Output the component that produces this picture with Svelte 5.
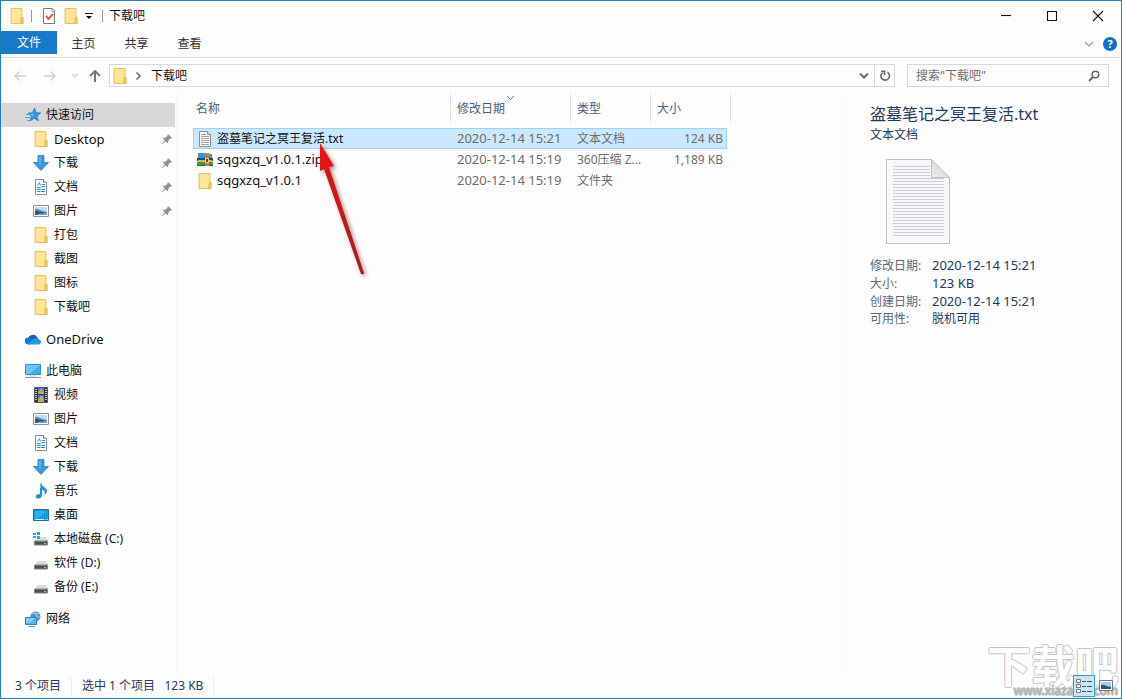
<script>
  const groups = [
    {
      icon: 'star', label: '快速访问', active: true,
      items: [
        { icon: 'folder', label: 'Desktop', pin: true },
        { icon: 'down', label: '下载', pin: true },
        { icon: 'doc', label: '文档', pin: true },
        { icon: 'pic', label: '图片', pin: true },
        { icon: 'folder', label: '打包' },
        { icon: 'folder', label: '截图' },
        { icon: 'folder', label: '图标' },
        { icon: 'folder', label: '下载吧' }
      ]
    },
    { icon: 'cloud', label: 'OneDrive', items: [] },
    {
      icon: 'pc', label: '此电脑',
      items: [
        { icon: 'film', label: '视频' },
        { icon: 'pic', label: '图片' },
        { icon: 'doc', label: '文档' },
        { icon: 'down', label: '下载' },
        { icon: 'music', label: '音乐' },
        { icon: 'screen', label: '桌面' },
        { icon: 'sysdisk', label: '本地磁盘 (C:)' },
        { icon: 'disk', label: '软件 (D:)' },
        { icon: 'disk', label: '备份 (E:)' }
      ]
    },
    { icon: 'net', label: '网络', items: [] }
  ];

  const files = [
    { icon: 'text', name: '盗墓笔记之冥王复活.txt', date: '2020-12-14 15:21', type: '文本文档', size: '124 KB' },
    { icon: 'zip', name: 'sqgxzq_v1.0.1.zip', date: '2020-12-14 15:19', type: '360压缩 Z...', size: '1,189 KB' },
    { icon: 'folder', name: 'sqgxzq_v1.0.1', date: '2020-12-14 15:19', type: '文件夹', size: '' }
  ];

  const details = [
    ['修改日期:', '2020-12-14 15:21'],
    ['大小:', '123 KB'],
    ['创建日期:', '2020-12-14 15:21'],
    ['可用性:', '脱机可用']
  ];

  const isLatin = (s) => /^[\x20-\x7e]+$/.test(s);
  let selected = $state(0);
  let query = $state('');
</script>

{#snippet icon(name)}
  <svg class="icon" viewBox="0 0 16 16" width="16" height="16" aria-hidden="true">
    {#if name === 'folder'}
      <path d="M2 .5h11v9h1v6H2z" fill="#fde38d" stroke="#e2c463" />
      <path d="M3 1.500h9v13H3z" fill="#ffe597" />
      <path d="M12 9.500h2v6h-2.500z" fill="#f4d06d" stroke="#dfbd55" />
    {:else if name === 'star'}
      <path d="M9.500 1l1.700 4.700 4.600.2-3.700 3 1.200 5-4.100-2.700L5 14l1.400-5L3 6.100l4.500-.4z" fill="#2f9be3" stroke="#1c75bb" stroke-width=".7" />
      <path d="M1 7.500h4M0 10.500h5M2 13.500h3" stroke="#4aa7e3" />
      <path d="M9.300 3l-1 4-3-.2 2.500 2.500z" fill="#8acbf5" />
    {:else if name === 'down'}
      <path d="M5 .5h6v7h4.500L8 15.500.5 7.500H5z" fill="#3d96e2" stroke="#2a7cc7" stroke-width=".8" />
      <path d="M6 1.500h2v8H6z" fill="#62adea" />
    {:else if name === 'doc'}
      <path d="M2.500.5h8l3 3v12h-11z" fill="#fff" stroke="#8b8f94" />
      <path d="M10.500.5v3h3" fill="#e8e8e8" stroke="#8b8f94" />
      <path d="M4.500 6.500l2-3 1 3M4 8.500h3.500M9 5.500h3M8.500 7.500H12M4 10.500h4M9 10.500h3M4 12.500h3.500M8 12.500h4" fill="none" stroke="#2595b5" />
    {:else if name === 'pic'}
      <path d="M.5 2.500h15v11H.5z" fill="#fff" stroke="#8c9196" />
      <path d="M2 4h12v8H2z" fill="#c3ddf3" />
      <path d="M2 6c3-1 5 2 12 3v3H2z" fill="#5d91ba" />
      <path d="M2 8c3-1 5 1 12 2v2H2z" fill="#2d5979" />
      <path d="M5 11l9-1v2H4z" fill="#8baab9" />
    {:else if name === 'cloud'}
      <path d="M3 8a5 5 0 0 1 9-2l2 3H4z" fill="#0b63b4" />
      <path d="M3.600 13.500a3.500 3.500 0 0 1-.5-7c2-.2 3 1 5 2l-3 5z" fill="#1379ce" />
      <path d="M3 12.500C6 11 8 7 11 7c1.500 0 2 1 2.500 1.600 3.500 0 3.200 4.900 0 4.900h-10z" fill="#2298e5" />
    {:else if name === 'pc' || name === 'screen'}
      {#if name === 'pc'}
        <path d="M.5 1.500h15v10H.5z" fill="#39aaf0" stroke="#3c8dbd" />
        <path d="M1 2h14L5 11H1z" fill="#70c6f8" />
        <path d="M5 13h6" stroke="#b9c1c6" />
        <path d="M0 14.500h16" stroke="#8d979d" />
      {:else}
        <path d="M.5 2.500h15v11H.5z" fill="#149bf0" stroke="#256d96" />
        <path d="M2 4h11l-7 7H2z" fill="#33aef8" />
        <path d="M2 12.500h9M12 12.500h1M14 12.500h1" stroke="#d9f0ff" />
      {/if}
    {:else if name === 'film'}
      <path d="M1.500.5h13v15h-13z" fill="#32363d" stroke="#555a60" />
      <path d="M3 2v12M13 2v12" stroke="#eee" stroke-dasharray="1 1" stroke-width="1.500" />
      <path d="M5 1h6v6H5zM5 8h6v7H5z" fill="#5579bf" />
      <path d="M5 5l2-2 2 2 2-1v3H5zM5 12l3-2 3 2v3H5z" fill="#cba956" />
      <path d="M7 3h3M7 10h3" stroke="#a6cff0" />
    {:else if name === 'music'}
      <path d="M7 .5h1.500c0 3 5.500 4 5.500 7.500 0 1.800-1 3-2.500 4 1-3.500-.5-4.500-2.500-5.500V12c0 2-1.500 3.500-3.800 3.500C1.800 15.500 2 11.500 5 11.200L7 11z" fill="#248fdd" />
      <path d="M7.500 1v4" stroke="#67bbf1" />
    {:else if name === 'sysdisk' || name === 'disk'}
      <path d="M4 6h9l2 4H2z" fill="#d9dadb" />
      <path d="M1.500 10h13v4h-13z" fill="#4a4f52" stroke="#81868a" />
      <path d="M3 10.500h10" stroke="#777d80" />
      <path d="M11 12h2v1h-2z" fill="#6edb87" />
      {#if name === 'sysdisk'}
        <path d="M0 2h3v2H0zM4 1h3v3H4zM0 5h3v2H0zM4 5h3v3H4z" fill="#28a9d7" />
      {/if}
    {:else if name === 'net'}
      <circle cx="10.500" cy="5.500" r="5" fill="#4c93bd" />
      <path d="M7 2c3 1 5 0 7 1M10 1c2 3 2 6 1 9M12 6h3" stroke="#a5d3e4" fill="none" />
      <path d="M.5 6.500h11v7H.5z" fill="#51b2ee" stroke="#2c83bd" />
      <path d="M1 7h9l-5 5H1z" fill="#83cef5" />
      <path d="M3 15.500h7" stroke="#6f9cb9" />
    {:else if name === 'text'}
      <path d="M2.500.5h8l3 3v12h-11z" fill="#fff" stroke="#898d91" />
      <path d="M10.500.5v3h3" fill="#ddd" stroke="#898d91" />
      <path d="M4 3.500h5M4 5.500h8M4 7.500h8M4 9.500h8M4 11.500h8M4 13.500h8" stroke="#9da1a5" />
    {:else if name === 'zip'}
      <path d="M1 1h6l2 1h6v5H1z" fill="#3293d7" />
      <path d="M0 6h16v3H0z" fill="#294779" />
      <path d="M1 8h14v2H1z" fill="#e5b73c" />
      <path d="M0 10h16v4H0z" fill="#3f963f" />
      <path d="M0 13.500h16" stroke="#28566b" />
      <path d="M8 1h4v13H8z" fill="#bd8637" />
      <path d="M8.500 6.500h3v4h-3z" fill="#5e4937" stroke="#f4d47e" />
    {/if}
  </svg>
{/snippet}

<div class="window">
  <header class="titlebar">
    <div class="quick">
      {@render icon('folder')}
      <i class="bar"></i>
      <button class="tool" aria-label="属性">
        <svg viewBox="0 0 16 16" width="16" height="16">
          <path d="M2.500.5h9l2 2v13h-11z" fill="#fff" stroke="#76797c" />
          <path d="M11 .5v3h2.500" fill="none" stroke="#999" />
          <path d="M5 8l2.500 3L12 6" fill="none" stroke="#dc623f" stroke-width="2" />
        </svg>
      </button>
      <button class="tool" aria-label="新建文件夹">{@render icon('folder')}</button>
      <button class="tool more" aria-label="自定义快速访问工具栏">
        <svg viewBox="0 0 8 8" width="8" height="8"><path d="M0 1.500h8" stroke="#222" /><path d="M1 4h6L4 7z" fill="#111" /></svg>
      </button>
      <i class="bar"></i>
      <span class="caption">下载吧</span>
    </div>
    <div class="controls">
      <button aria-label="最小化"><svg viewBox="0 0 10 10"><path d="M0 4.500h10" /></svg></button>
      <button aria-label="最大化"><svg viewBox="0 0 10 10"><path d="M.5.5h9v9h-9z" /></svg></button>
      <button aria-label="关闭"><svg viewBox="0 0 10 10"><path d="M0 0l10 10M10 0L0 10" /></svg></button>
    </div>
  </header>

  <nav class="ribbon">
    <button class="file">文件</button>
    <button>主页</button>
    <button>共享</button>
    <button>查看</button>
    <div class="help">
      <button aria-label="展开功能区"><svg viewBox="0 0 10 6" width="10" height="6"><path d="M1 1l4 4 4-4" fill="none" stroke="#999" stroke-width="1.200" /></svg></button>
      <button class="round" aria-label="帮助">?</button>
    </div>
  </nav>

  <div class="navrow">
    <div class="arrows">
      <button aria-label="后退"><svg viewBox="0 0 12 12" width="12" height="12"><path d="M12 6H1M5.500 1.500L1 6l4.500 4.500" stroke="#d0d0d0" stroke-width="1.500" fill="none" /></svg></button>
      <button aria-label="前进"><svg viewBox="0 0 12 12" width="12" height="12"><path d="M0 6h11M6.500 1.500L11 6l-4.500 4.500" stroke="#d0d0d0" stroke-width="1.500" fill="none" /></svg></button>
      <button class="narrow" aria-label="最近浏览的位置"><svg viewBox="0 0 8 6" width="6" height="5"><path d="M0 1l4 4 4-4" stroke="#ccc" stroke-width="1.500" fill="none" /></svg></button>
      <button class="narrow" aria-label="向上"><svg viewBox="0 0 12 12" width="12" height="12"><path d="M6 12V1M1 6l5-5 5 5" stroke="#777" stroke-width="2" fill="none" /></svg></button>
    </div>
    <div class="address">
      {@render icon('folder')}
      <svg class="crumb" viewBox="0 0 5 8" width="5" height="8"><path d="M.5.5L4 4 .5 7.500" fill="none" stroke="#666" stroke-width="1.500" /></svg>
      <button class="place">下载吧</button>
      <button class="drop" aria-label="历史记录"><svg viewBox="0 0 10 6" width="10" height="6"><path d="M1 .5l4 4 4-4" fill="none" stroke="#666" stroke-width="2" /></svg></button>
      <button class="refresh" aria-label="刷新"><svg viewBox="0 0 12 12" width="12" height="12"><path d="M8.500 2.200A4.300 4.300 0 1 1 3.500 2.500M2 1.200h3.500v4" fill="none" stroke="#666" stroke-width="1.600" /></svg></button>
    </div>
    <label class="search">
      <input type="search" bind:value={query} placeholder={'搜索"下载吧"'} aria-label="搜索" />
      <svg viewBox="0 0 12 12" width="12" height="12"><circle cx="7.500" cy="4.500" r="3.300" fill="none" stroke="#666" stroke-width="1.500" /><path d="M5 7L1 11" stroke="#666" stroke-width="2" /></svg>
    </label>
  </div>

  <div class="body">
    <aside class="tree">
      {#each groups as g}
        <section>
          <a class="node" class:active={g.active} class:latin={isLatin(g.label)} href="#top">{@render icon(g.icon)}<span>{g.label}</span></a>
          {#each g.items as it}
            <a class="node child" class:latin={isLatin(it.label)} href="#top">
              {@render icon(it.icon)}<span>{it.label}</span>
              {#if it.pin}
                <svg class="pin" viewBox="0 0 10 10" width="10" height="10"><path d="M6 0l4 4-1 .7-.8-.2L6.500 6.200 6.200 8.500l-.8.7L3.500 7.300.5 10 0 9.500l2.700-3L.8 4.600l.7-.8 2.300-.3L5.500 1.800 5.300 1z" fill="#8b949c" /></svg>
              {/if}
            </a>
          {/each}
        </section>
      {/each}
    </aside>

    <main class="list">
      <table>
        <colgroup><col class="c-name" /><col class="c-date" /><col class="c-type" /><col class="c-size" /><col class="c-end" /></colgroup>
        <thead>
          <tr>
            <th><div class="first">名称</div></th>
            <th><div>修改日期<svg class="sort" viewBox="0 0 7 4" width="7" height="4"><path d="M0 0l3.500 3.500L7 0" fill="none" stroke="#777" /></svg></div></th>
            <th><div>类型</div></th>
            <th colspan="2"><div>大小</div></th>
          </tr>
        </thead>
        <tbody>
          {#each files as f, i}
            <tr class:selected={i === selected} onclick={() => (selected = i)}>
              <td class="name"><div class:latin={isLatin(f.name)}>{@render icon(f.icon)}<span>{f.name}</span></div></td>
              <td class="latin">{f.date}</td>
              <td>{f.type}</td>
              <td class="size">{f.size}</td>
              <td class="end"></td>
            </tr>
          {/each}
        </tbody>
      </table>
    </main>

    <aside class="details">
      <h1>盗墓笔记之冥王复活.txt</h1>
      <p>文本文档</p>
      <svg class="preview" viewBox="0 0 64 85" width="64" height="85" aria-hidden="true">
        <defs>
          <linearGradient id="fold" x1="0" y1="1" x2="1" y2="0"><stop offset="0" stop-color="#eeeef0" /><stop offset="1" stop-color="#cfcfd4" /></linearGradient>
        </defs>
        <path d="M.5.5h45l18 18v66H.5z" fill="#f8f8fb" stroke="#bfc0c4" />
        {#each Array(24) as _, n}
          <path d="M7 {n * 3 + 7.5}h{n < 4 ? 37 : 51}" stroke="#cccdd4" />
        {/each}
        <path d="M45.500.5v18h18z" fill="url(#fold)" stroke="#bfc0c4" />
      </svg>
      <dl>
        {#each details as [k, v]}
          <dt>{k}</dt>
          <dd class:latin={isLatin(v)}>{v}</dd>
        {/each}
      </dl>
    </aside>
  </div>

  <footer class="status">
    <span>3 个项目</span>
    <span>选中 1 个项目&nbsp;&nbsp; 123 KB</span>
    <div class="views">
      <button class="on" aria-label="详细信息">
        <svg viewBox="0 0 16 14" width="16" height="14"><path d="M.5.5h4v3h-4zM.5 5.500h4v3h-4zM.5 10.500h4v3h-4z" fill="#fff" stroke="#777" /><path d="M6 2.500h4M11 2.500h5M6 7.500h4M11 7.500h5M6 12.500h4M11 12.500h5" stroke="#455" /></svg>
      </button>
      <button aria-label="大图标">
        <svg viewBox="0 0 14 12" width="14" height="12"><path d="M.5.5h13v10H.5z" fill="#fff" stroke="#777" /><path d="M2 2h10v7H2z" fill="#a9cfee" /><path d="M2 5c4-1 5 2 10 2v2H2z" fill="#2c5779" /></svg>
      </button>
    </div>
  </footer>

  <div class="watermark" aria-hidden="true"><b>下载吧</b><small>www.xiazaiba.com</small></div>

  <svg class="pointer" viewBox="0 0 60 144" width="60" height="144" aria-hidden="true">
    <defs>
      <linearGradient id="red" x1="0" y1="0" x2="0" y2="1"><stop offset="0" stop-color="#ff1010" /><stop offset=".25" stop-color="#d81515" /><stop offset="1" stop-color="#a81c20" /></linearGradient>
    </defs>
    <path d="M10 3L24 26l-5 1 35 106q0 2-3 1L14 29l-4 2z" fill="url(#red)" />
  </svg>
</div>

<style>
  :global(body) { margin: 0; }
  * { box-sizing: border-box; }
  .window {
    position: relative; display: flex; flex-direction: column; min-height: 100vh; overflow: hidden;
    border: 1px solid #1f7fbd; background: #fdfdfd; color: #111;
    font: 12px/18px "Noto Sans", "Noto Sans CJK SC", sans-serif;
  }
  button { font: inherit; color: inherit; border: 0; padding: 0; background: none; display: flex; align-items: center; justify-content: center; }
  a { color: inherit; text-decoration: none; }
  .latin { font-size: 13px; }
  .icon { display: block; flex: none; }

  .titlebar { display: flex; justify-content: space-between; height: 30px; }
  .quick { display: flex; align-items: center; padding-left: 8px; }
  .bar { width: 1px; height: 12px; background: #999; margin: 0 6px; }
  .tool { width: 22px; height: 22px; }
  .tool.more { width: 14px; }
  .controls { display: flex; }
  .controls button { width: 46px; }
  .controls svg { width: 10px; height: 10px; overflow: visible; fill: none; stroke: #111; stroke-width: 1.1; }

  .ribbon { display: flex; align-items: flex-start; height: 27px; border-bottom: 1px solid #dcdddf; color: #333; }
  .ribbon > button { width: 53px; height: 24px; padding-top: 1px; }
  .ribbon > .file { width: 56px; height: 23px; background: #1979ca; color: #fff; }
  .help { display: flex; align-items: center; gap: 9px; margin-left: auto; padding: 6px 4px 0 0; }
  .help .round { width: 14px; height: 14px; border-radius: 50%; background: #0f6fc0; color: #fff; font-weight: 700; font-size: 11px; }

  .navrow { display: flex; align-items: center; height: 35px; padding: 0 12px 0 4px; }
  .arrows { display: flex; width: 104px; }
  .arrows button { width: 30px; height: 22px; }
  .arrows .narrow { width: 20px; }
  .address { flex: 1; display: flex; align-items: center; height: 23px; border: 1px solid #d9d9d9; padding-left: 2px; }
  .crumb { margin: 0 10px 0 8px; }
  .place { flex: 1; justify-content: flex-start; }
  .drop, .refresh { height: 21px; width: 20px; }
  .refresh { border-left: 1px solid #d9d9d9; }
  .search { display: flex; align-items: center; width: 202px; height: 23px; margin-left: 12px; padding: 0 8px; border: 1px solid #d9d9d9; }
  .search input { flex: 1; min-width: 0; border: 0; outline: 0; padding: 0; background: none; font: inherit; }
  .search input::placeholder { color: #6d6d6d; opacity: 1; }

  .body { flex: 1; display: flex; }
  .tree { width: 177px; padding: 10px 2px 0 0; border-right: 1px solid #f3f3f3; }
  .tree section { margin-bottom: 8px; }
  .node { display: flex; align-items: center; gap: 5px; height: 24px; padding: 0 3px 0 24px; }
  .node.active { background: #d9d7da; }
  .child { padding-left: 32px; }
  .pin { margin-left: auto; }

  .list { flex: 1; padding: 1px 0 0 15px; }
  table { table-layout: fixed; width: 538px; border-collapse: collapse; color: #6d6d6d; }
  .c-name { width: 258px; }
  .c-date { width: 120px; }
  .c-type { width: 80px; }
  .c-size { width: 76px; }
  .c-end { width: 4px; }
  th, td { padding: 0; text-align: left; font-weight: 400; white-space: nowrap; }
  th { height: 34px; vertical-align: top; color: #4c607a; }
  th div { position: relative; height: 28px; line-height: 30px; padding-left: 6px; border-right: 1px solid #e2e3e5; }
  th .first { padding-left: 3px; }
  .sort { position: absolute; left: 56px; top: 2px; }
  td { height: 21px; line-height: 19px; padding-left: 6px; }
  td.name { padding-left: 4px; color: #111; }
  td div { display: flex; align-items: center; gap: 4px; }
  td.size { padding: 0 4px 0 0; text-align: right; }
  td.end { padding: 0; }
  .selected td:not(.end) { background: #cce8ff; box-shadow: inset 0 1px #99d1ff, inset 0 -1px #99d1ff; }
  .selected td.name { box-shadow: inset 1px 1px #99d1ff, inset 0 -1px #99d1ff; }
  .selected td.size { box-shadow: inset -1px 1px #99d1ff, inset 0 -1px #99d1ff; }

  .details { width: 276px; padding: 9px 12px 0 24px; border-left: 1px solid #fafafa; color: #1e395b; }
  h1 { margin: 0; font-size: 16px; line-height: 24px; font-weight: 400; }
  p { margin: 0; }
  .preview { display: block; margin: 15px 0 12px 16px; }
  dl { display: grid; grid-template-columns: 62px 1fr; grid-auto-rows: 18px; align-items: baseline; margin: 0; }
  dt { color: #5a6779; }
  dd { margin: 0; }

  .status { display: flex; align-items: center; height: 24px; padding: 0 4px; color: #1e395b; }
  .status span { padding: 0 10px; border-right: 1px solid #eee; line-height: 18px; }
  .views { position: relative; z-index: 1; display: flex; margin-left: auto; }
  .views button { width: 22px; height: 22px; }
  .views .on { background: #c9e7f8; border: 1px solid #3c9ac9; }

  .watermark {
    position: absolute; right: 0; bottom: 0; width: 134px; height: 58px; color: #fdfdfd; pointer-events: none;
    -webkit-text-stroke: 2px #fdfdfd; paint-order: stroke fill;
    text-shadow: 1px 0 #c4c4c4, -1px 0 #c4c4c4, 0 1px #c4c4c4, 0 -1px #c4c4c4;
  }
  .watermark b { display: block; font-size: 44px; line-height: 52px; }
  .watermark small { position: absolute; right: 3px; bottom: 0; font-size: 12px; line-height: 14px; font-weight: 400; color: #b4b4b4; }

  .pointer { position: absolute; left: 309px; top: 139px; pointer-events: none; filter: drop-shadow(2px 2px 2px rgb(80 0 0 / 45%)); }
</style>
